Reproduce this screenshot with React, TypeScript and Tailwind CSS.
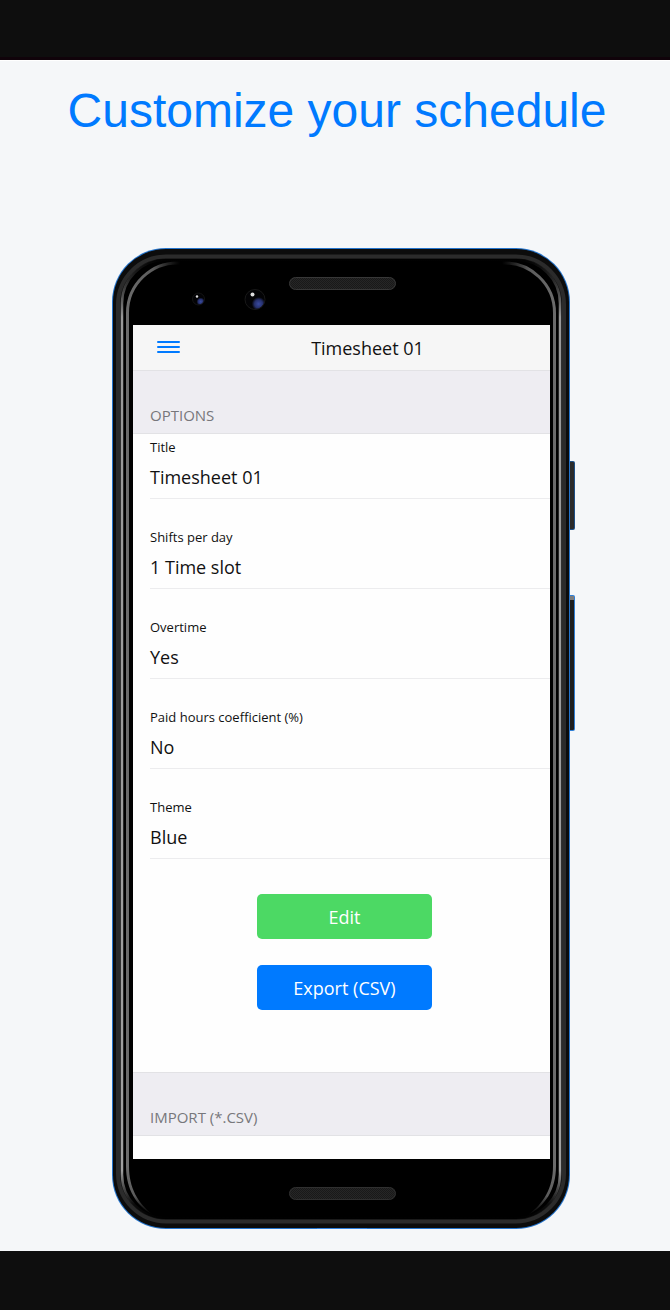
import React from 'react';

const fields = [
  { label: 'Title', value: 'Timesheet 01' },
  { label: 'Shifts per day', value: '1 Time slot' },
  { label: 'Overtime', value: 'Yes' },
  { label: 'Paid hours coefficient (%)', value: 'No' },
  { label: 'Theme', value: 'Blue' },
];

function PhoneFrame() {
  return (
    <svg
      className="absolute inset-0 h-full w-full"
      viewBox="0 0 463 981"
      preserveAspectRatio="none"
      aria-hidden="true"
    >
      <defs>
        <linearGradient id="rim" x1="0" y1="0" x2="0" y2="1">
          <stop offset="0" stopColor="#888" stopOpacity="0" />
          <stop offset="0.02" stopColor="#777" stopOpacity="0.3" />
          <stop offset="0.06" stopColor="#999" />
          <stop offset="0.95" stopColor="#a0a0a0" />
          <stop offset="0.985" stopColor="#777" stopOpacity="0.1" />
          <stop offset="1" stopColor="#777" stopOpacity="0" />
        </linearGradient>
        <linearGradient id="arcL" gradientUnits="userSpaceOnUse" x1="14" y1="0" x2="68" y2="0">
          <stop offset="0" stopColor="#6c6c6c" />
          <stop offset="0.5" stopColor="#5c5c5c" />
          <stop offset="1" stopColor="#444" stopOpacity="0" />
        </linearGradient>
        <linearGradient id="arcR" gradientUnits="userSpaceOnUse" x1="444" y1="0" x2="390" y2="0">
          <stop offset="0" stopColor="#6c6c6c" />
          <stop offset="0.5" stopColor="#5c5c5c" />
          <stop offset="1" stopColor="#444" stopOpacity="0" />
        </linearGradient>
        <linearGradient id="foot" gradientUnits="userSpaceOnUse" x1="0" y1="918" x2="0" y2="968">
          <stop offset="0" stopColor="#6c6c6c" />
          <stop offset="0.6" stopColor="#5c5c5c" />
          <stop offset="1" stopColor="#333" stopOpacity="0" />
        </linearGradient>
        <pattern id="mesh" width="2" height="2" patternUnits="userSpaceOnUse">
          <rect width="2" height="2" fill="#262626" />
          <rect width="1" height="1" fill="#191919" />
          <rect x="1" y="1" width="1" height="1" fill="#191919" />
        </pattern>
        <radialGradient id="lens" cx="0.68" cy="0.72" r="0.34">
          <stop offset="0" stopColor="#3a4ba0" />
          <stop offset="0.6" stopColor="#26306c" />
          <stop offset="1" stopColor="#030305" />
        </radialGradient>
      </defs>
      <rect x="455" y="213" width="8" height="69" rx="2" fill="#1d4f86" />
      <rect x="455" y="214" width="7" height="67" rx="1" fill="#2b2b2b" />
      <rect x="455" y="347" width="8" height="136" rx="2" fill="#2f7fd6" />
      <rect x="455" y="348" width="7" height="134" rx="1" fill="#1e1e1e" />
      <rect x="457" y="348" width="5" height="4" fill="#7c7c7c" />
      <rect x="0" y="0" width="458" height="981" rx="54" fill="#2474cc" />
      <rect x="1" y="1" width="456" height="979" rx="53" fill="#0c0c0c" />
      <rect x="6" y="8.500" width="446" height="965" rx="48" fill="none" stroke="#2b2b2b" strokeWidth="4" />
      <rect x="9" y="11" width="440" height="960" rx="45" fill="#000" />
      <rect x="10" y="11.500" width="438" height="959" rx="44" fill="none" stroke="url(#rim)" strokeWidth="2.500" />
      <path d="M15.500 918V65A50 50 0 0 1 68 15" fill="none" stroke="url(#arcL)" strokeWidth="3" />
      <path d="M442.500 918V65A50 50 0 0 0 390 15" fill="none" stroke="url(#arcR)" strokeWidth="3" />
      <path d="M14 918H17C17 940 26 955 40 966C25 958 14 942 14 918Z" fill="url(#foot)" />
      <path d="M444 918H441C441 940 432 955 416 967C433 958 444 942 444 918Z" fill="url(#foot)" />
      <path d="M205 980.500H255" stroke="#2f80de" />
      <rect x="177.500" y="29.500" width="106" height="12" rx="6" fill="url(#mesh)" stroke="#383838" />
      <rect x="177.500" y="939.500" width="106" height="12" rx="6" fill="url(#mesh)" stroke="#303030" />
      <circle cx="86.500" cy="51" r="6" fill="url(#lens)" stroke="#141414" />
      <circle cx="85" cy="48.500" r="1.200" fill="#ddd" />
      <circle cx="143" cy="51.500" r="10" fill="url(#lens)" stroke="#181818" />
      <circle cx="140.500" cy="46.500" r="2" fill="#ddd" />
    </svg>
  );
}

function SectionHeading({ children }: { children: React.ReactNode }) {
  return (
    <h3 className="flex h-16 items-end border-y border-[#e2e2e5] bg-[#eeedf2] px-[17px] pb-2 text-[15px] leading-5 text-[#77777b]">
      {children}
    </h3>
  );
}

export default function App() {
  return (
    <div className="flex min-h-screen flex-col bg-[#f5f7f9] font-['Open_Sans','Noto_Sans',sans-serif]">
      <div className="h-[60px] border-b-3 border-[#10030a] bg-[#0e0e0e]" />
      <main className="flex flex-1 flex-col items-center border-t border-white">
        <h1 className="mt-[22px] pl-1 text-center font-['Liberation_Sans',Arial,sans-serif] text-5xl leading-[56px] text-[#007aff]">
          Customize your schedule
        </h1>
        <div className="flex w-full justify-center pt-[109px] pb-[21px] pl-[17px]">
          <div className="relative w-full max-w-[463px] pt-[77px] pr-[25px] pb-[70px] pl-[21px]">
            <PhoneFrame />
            <div className="relative bg-[#fefefe] text-[#111111]">
              <header className="grid h-[45px] grid-cols-[52px_1fr] items-center bg-[#f6f6f6]">
                <button type="button" aria-label="Menu" className="ml-6 w-[23px] pb-0.5">
                  <svg viewBox="0 0 23 14" className="h-[14px] w-[23px]" stroke="#007aff" strokeWidth="2" strokeLinecap="round" aria-hidden="true">
                    <path d="M1 2H22M1 7H22M1 12H22" />
                  </svg>
                </button>
                <h2 className="text-center text-lg leading-6">Timesheet 01</h2>
              </header>
              <SectionHeading>OPTIONS</SectionHeading>
              <dl className="flex flex-col gap-[25px] pl-[17px]">
                {fields.map((field) => (
                  <div key={field.label} className="border-b border-[#ececee] pt-[3px] pb-[9px]">
                    <dt className="text-[13px] leading-5">{field.label}</dt>
                    <dd className="pt-2 text-lg leading-6">{field.value}</dd>
                  </div>
                ))}
              </dl>
              <div className="flex flex-col items-center gap-[26px] pt-[35px] pb-[62px] pl-[6px]">
                <button type="button" className="h-[45px] w-[175px] rounded-[5px] bg-[#4cd964] text-lg leading-6 text-white">
                  Edit
                </button>
                <button type="button" className="h-[45px] w-[175px] rounded-[5px] bg-[#007aff] text-lg leading-6 text-white">
                  Export (CSV)
                </button>
              </div>
              <SectionHeading>IMPORT (*.CSV)</SectionHeading>
              <div className="h-[23px]" />
            </div>
          </div>
        </div>
      </main>
      <div className="h-[59px] bg-[#0e0e0e]" />
    </div>
  );
}
